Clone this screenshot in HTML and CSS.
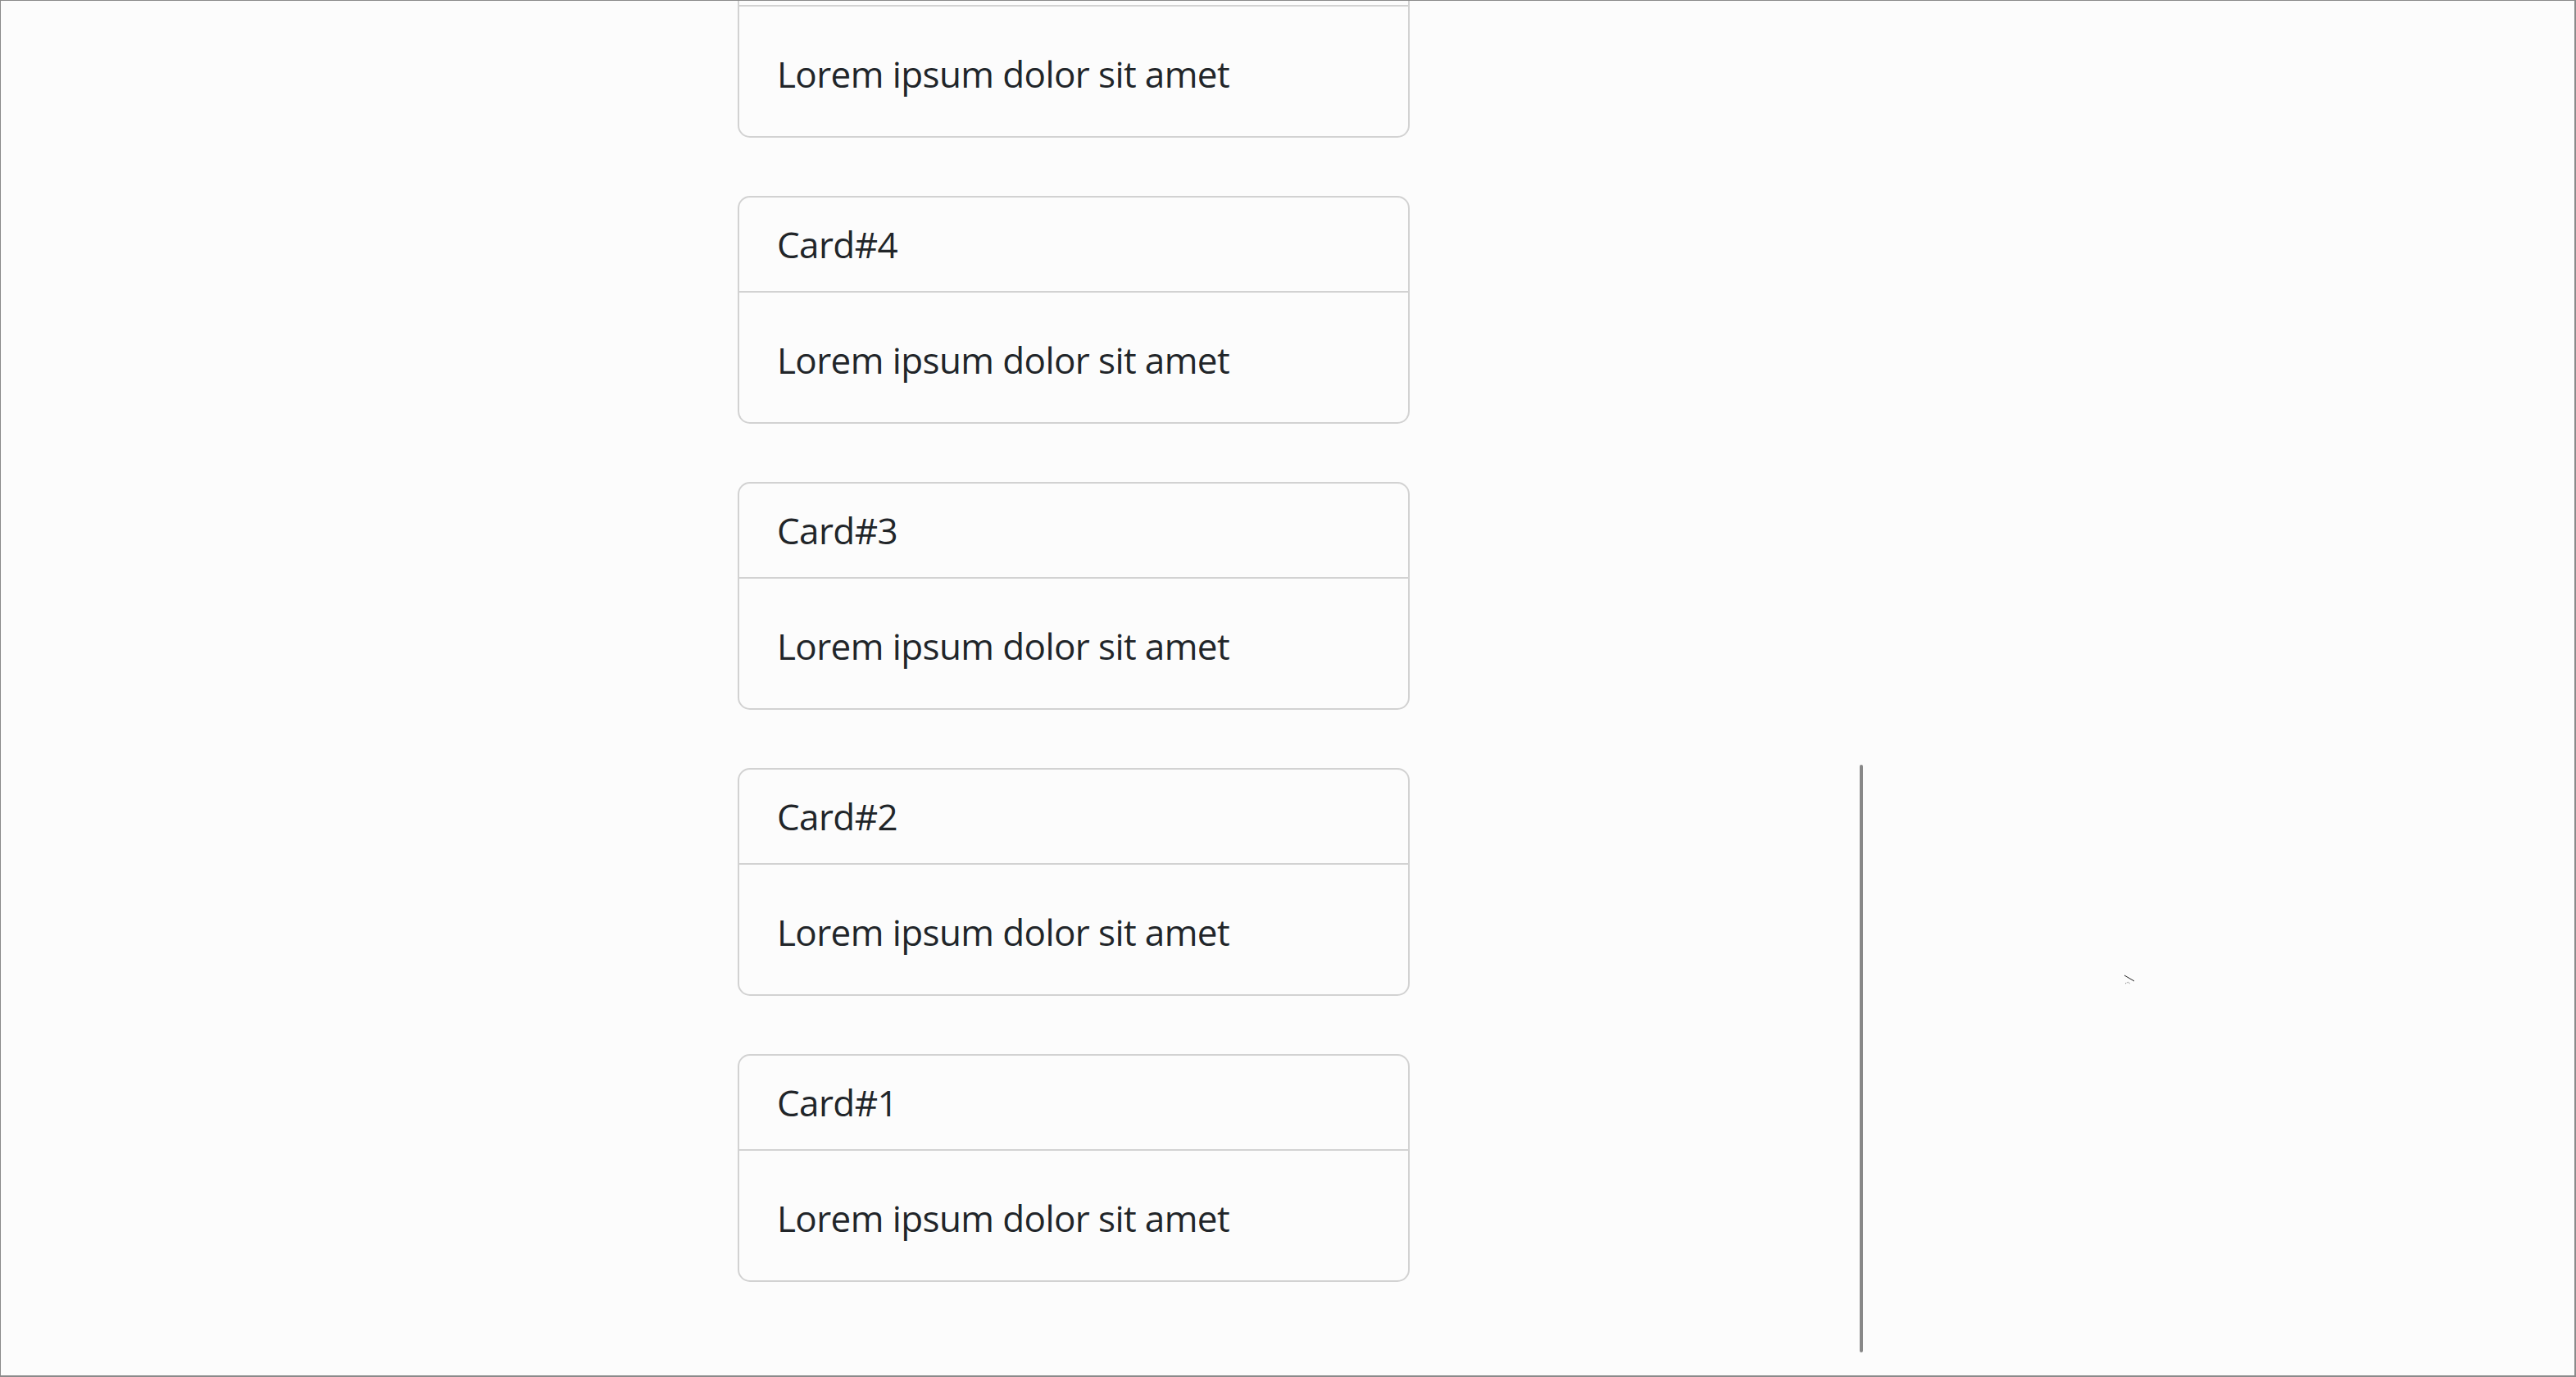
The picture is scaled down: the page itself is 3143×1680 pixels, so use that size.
FILE: index.html
```html
<!DOCTYPE html>
<html lang="en">
<head>
<meta charset="utf-8">
<title>Cards</title>
<link rel="stylesheet" href="styles.css">
</head>
<body>
<div class="frame">
  <div class="layout">
    <div class="spacer"></div>
    <div class="cards">
      <div class="card">
        <div class="card-header">Card#5</div>
        <div class="card-body">Lorem ipsum dolor sit amet</div>
      </div>
      <div class="card">
        <div class="card-header">Card#4</div>
        <div class="card-body">Lorem ipsum dolor sit amet</div>
      </div>
      <div class="card">
        <div class="card-header">Card#3</div>
        <div class="card-body">Lorem ipsum dolor sit amet</div>
      </div>
      <div class="card">
        <div class="card-header">Card#2</div>
        <div class="card-body">Lorem ipsum dolor sit amet</div>
      </div>
      <div class="card">
        <div class="card-header">Card#1</div>
        <div class="card-body">Lorem ipsum dolor sit amet</div>
      </div>
    </div>
    <div class="gap"></div>
    <div class="bar-col"><div class="bar"></div></div>
  </div>
  <svg class="cursor" width="14" height="14" viewBox="0 0 14 14"><path d="M1 1 L13 8" stroke="#222" stroke-width="1" fill="none"/><path d="M2 11 L6 9 L8 12" stroke="#777" stroke-width="1" fill="none" stroke-dasharray="1 1"/></svg>
</div>
</body>
</html>
```
FILE: styles.css
```css
html, body {
  margin: 0;
  padding: 0;
  background: #fcfcfc;
}
.frame {
  position: relative;
  width: 3143px;
  height: 1680px;
  box-sizing: border-box;
  border-top: 1px solid #8a8a8a;
  border-left: 1px solid #8a8a8a;
  border-right: 2px solid #8a8a8a;
  border-bottom: 2px solid #8a8a8a;
  overflow: hidden;
  background: #fcfcfc;
  font-family: "Open Sans", "Noto Sans", sans-serif;
  color: #212529;
}
.layout {
  display: grid;
  grid-template-columns: 899px 820px 549px 4px 1fr;
  align-items: start;
}
.cards {
  display: flex;
  flex-direction: column;
  gap: 71px;
  margin-top: -111px;
}
.card {
  border: 2px solid #d2d2d2;
  border-radius: 15px;
  background: #fcfcfc;
  box-sizing: border-box;
  height: 278px;
  display: flex;
  flex-direction: column;
}
.card-header {
  height: 114px;
  border-bottom: 2px solid #d2d2d2;
  display: flex;
  align-items: center;
  padding: 0 46px;
  font-size: 44px;
  letter-spacing: -0.6px;
}
.card-body {
  flex: 1;
  display: flex;
  align-items: center;
  padding: 6px 46px 0;
  font-size: 44px;
  letter-spacing: -0.6px;
}
.bar-col {
  padding-top: 932px;
}
.bar {
  width: 4px;
  height: 717px;
  background: #888888;
  border-radius: 2px;
}
.cursor {
  position: absolute;
  left: 2590px;
  top: 1188px;
}
```
